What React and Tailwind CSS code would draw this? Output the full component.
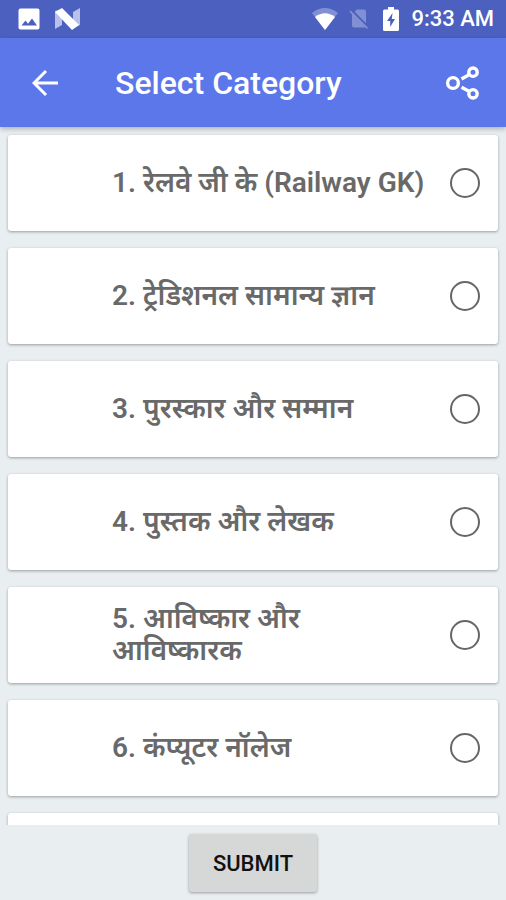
import React, { useState } from 'react';

const CATEGORIES = [
  '1. रेलवे जी के (Railway GK)',
  '2. ट्रेडिशनल सामान्य ज्ञान',
  '3. पुरस्कार और सम्मान',
  '4. पुस्तक और लेखक',
  '5. आविष्कार और आविष्कारक',
  '6. कंप्यूटर नॉलेज',
];

const App = () => {
  const [selected, setSelected] = useState(null);

  return (
    <div className="flex h-screen flex-col bg-[#e9eef1] font-['Roboto','Noto_Sans_Devanagari','Noto_Sans',sans-serif]">
      <StatusBar />
      <AppBar title="Select Category" />

      <main className="min-h-0 flex-1 overflow-hidden px-2 pt-2">
        <div className="flex flex-col gap-[17px]">
          {CATEGORIES.map((label, index) => (
            <CategoryCard
              key={label}
              label={label}
              checked={selected === index}
              onChange={() => setSelected(index)}
            />
          ))}
          {/* Top edge of the next card */}
          <div className="h-24 shrink-0 rounded-[3px] bg-white shadow-[0_1px_3px_rgba(0,0,0,0.35)]" />
        </div>
      </main>

      <footer className="flex shrink-0 justify-center pt-[9px] pb-2">
        <button
          type="button"
          className="h-[58px] w-32 rounded-[3px] bg-[#d6d7d7] text-[22px] font-medium text-[#111111] shadow-[0_1px_3px_rgba(0,0,0,0.35)]"
        >
          SUBMIT
        </button>
      </footer>
    </div>
  );
};

const StatusBar = () => (
  <div className="flex h-[38px] shrink-0 items-center justify-between bg-[#4c60c0] pr-3 pl-[18px] text-white">
    <div className="flex items-center gap-[15px]">
      <PictureIcon />
      <NougatIcon />
    </div>
    <div className="flex items-center">
      <WifiIcon />
      <NoSimIcon />
      <BatteryIcon />
      <span className="ml-3 text-[22px] leading-7 font-medium">9:33 AM</span>
    </div>
  </div>
);

const AppBar = ({ title }) => (
  <header className="relative z-10 flex h-[89px] shrink-0 items-center bg-[#5c77e9] pr-[26px] pl-8 text-white shadow-[0_2px_5px_rgba(0,0,0,0.25)]">
    <button type="button" aria-label="Back">
      <svg className="h-7 w-7" viewBox="0 0 28 28" fill="none" stroke="currentColor" strokeWidth="3">
        <path d="M26 14H2.5M14 2 2 14l12 12" />
      </svg>
    </button>
    <h1 className="ml-[55px] flex-1 text-[32px] leading-10 font-medium">{title}</h1>
    <button type="button" aria-label="Share">
      <svg className="h-9 w-9" viewBox="0 0 36 36" fill="none" stroke="currentColor" strokeWidth="3.4">
        <circle cx="9" cy="18" r="5.4" />
        <circle cx="29" cy="7.2" r="4.2" />
        <circle cx="29" cy="28.8" r="4.2" />
        <path d="m17.500 14 7.500-4.300M17.500 22.200l7.500 4.100" />
      </svg>
    </button>
  </header>
);

const CategoryCard = ({ label, checked, onChange }) => (
  <label className="flex h-24 shrink-0 cursor-pointer items-center rounded-[3px] bg-white pr-[18px] pl-[104px] shadow-[0_1px_3px_rgba(0,0,0,0.35)]">
    <span className="flex-1 text-[28px] leading-8 font-semibold text-[#696969]">{label}</span>
    <input
      type="radio"
      name="category"
      checked={checked}
      onChange={onChange}
      className="ml-4 h-[30px] w-[30px] shrink-0 appearance-none rounded-full border-2 border-[#666666] checked:border-[9px] checked:border-[#5c77e9]"
    />
  </label>
);

/* Status bar icons */
const PictureIcon = () => (
  <svg className="h-[22px] w-[22px]" viewBox="0 0 22 22">
    <rect x="0.5" y="0.5" width="21" height="21" rx="2" fill="currentColor" />
    <path d="M3.5 17.5 7.500 12.500l2.500 3.200 4-5.200 5 7z" fill="#4c60c0" />
  </svg>
);

const NougatIcon = () => (
  <svg className="h-[22px] w-[25px]" viewBox="0 0 25 22">
    <path d="M0 3 7 1v16l-7 4zM18 4l7-4v17l-7 3z" fill="#b9c1e8" />
    <path d="M0 4 7 0l17 17-7 5z" fill="currentColor" />
  </svg>
);

const WifiIcon = () => (
  <svg className="h-[22px] w-7" viewBox="0 0 28 22">
    <path d="M1 5Q14-5 27 5L14 22z" fill="#8290d3" />
    <path d="M4 9Q14 1.500 24 9L14 22z" fill="currentColor" />
  </svg>
);

const NoSimIcon = () => (
  <svg className="ml-2.5 h-[22px] w-5" viewBox="2 2 20 21" fill="#8290d3">
    <path d="M19 5c0-1.100-.9-2-2-2h-7L7.660 5.340 19 16.680zM3.650 3.880 2.380 5.150 5 7.770V19c0 1.100.9 2 2 2h10c.35 0 .67-.1.960-.26l1.880 1.880 1.270-1.270z" />
  </svg>
);

const BatteryIcon = () => (
  <svg className="ml-3.5 h-6 w-4" viewBox="0 0 16 24">
    <path d="M5 0h6v2.500h3.500q1.500 0 1.500 1.500v18.500q0 1.500-1.500 1.500h-13Q0 24 0 22.500V4q0-1.500 1.500-1.500H5z" fill="currentColor" />
    <path d="M9.500 6 4 14h3.200v6L12 12H8.800z" fill="#4c60c0" />
  </svg>
);

export default App;
